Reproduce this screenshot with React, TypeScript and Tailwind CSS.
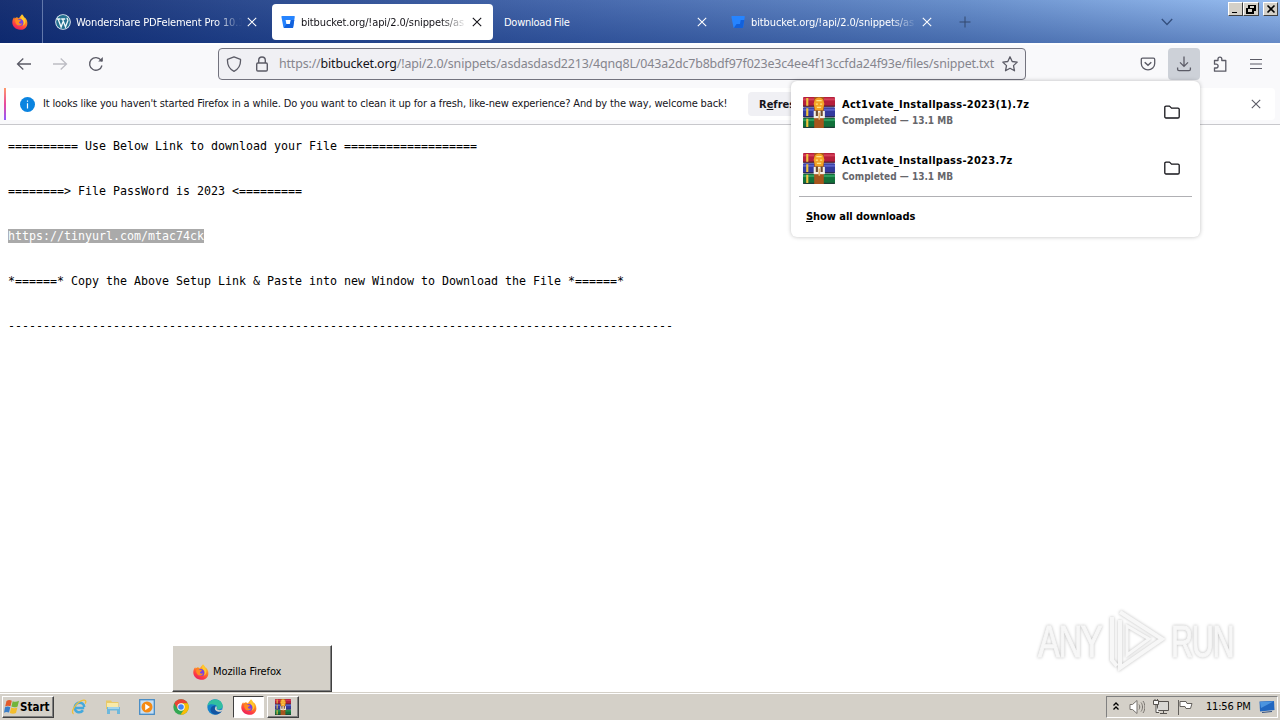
import React from 'react';

const TAHOMA = "font-['DejaVu_Sans_Condensed','DejaVu_Sans',sans-serif] [font-stretch:condensed]";

const FirefoxLogo: React.FC<{ id: string }> = ({ id }) => (
  <svg viewBox="0 0 16 16" className="w-4 h-4 shrink-0">
    <defs>
      <linearGradient id={id} x1="0.8" y1="0" x2="0.3" y2="1">
        <stop offset="0" stopColor="#ffd93a" />
        <stop offset="0.4" stopColor="#ff8a1e" />
        <stop offset="0.75" stopColor="#ff3b45" />
        <stop offset="1" stopColor="#e5205f" />
      </linearGradient>
    </defs>
    <path d="M10 .3c1.2 1 1.7 2 2.2 3 .9.3 1.6 1 2.1 2 1.1 2 1.5 4.600.6 6.600-1.300 2.600-3.900 4-6.900 3.900C3.700 15.700.4 12.500.3 8.600.3 6.500 1 4.600 2.200 3.300l.4 1.200C3.300 3.800 4 3.400 4.800 3.200 5.600 3.400 6.500 3.900 7 4.500 7.600 2.900 9 1.600 10 .3z" fill={`url(#${id})`} />
    <circle cx="8" cy="8.400" r="3.500" fill="#7542e5" />
    <path d="M3.300 5.500c1.400-.6 2.700-.3 3.700.5 1 .1 1.800.2 2 .6-.3.900-1.500 1-2.100 1.500.1 1.500 1.600 2.200 3.300 1.200-.6 2-3 2.900-4.800 1.900C3.700 10.200 2.800 7.700 3.300 5.500z" fill="#ff8c22" />
    <path d="M10.200 1c.4 2 3.600 3.600 3.200 7-.2 2-1.600 3.300-2.800 3.800 1-1.300 1.500-3 .8-4.500-.6-1.300-2.400-2.300-2.300-4 .1-1 .6-1.700 1.100-2.300z" fill="#ffca2c" />
  </svg>
);

const WordpressLogo = () => (
  <svg viewBox="0 0 16 16" className="w-4 h-4 shrink-0">
    <circle cx="8" cy="8" r="7.800" fill="#e8f3f7" />
    <circle cx="8" cy="8" r="6.900" fill="#23708f" />
    <path d="M2 5h3.500M6.200 5h4M3.100 5l3 8L8 7.700M7.500 5l3 8 2.300-6.300c.3-1.300-.8-1.600-.7-3" stroke="#f1f8fa" strokeWidth="1.300" fill="none" />
  </svg>
);

const BitbucketLogo: React.FC<{ dim?: boolean }> = ({ dim }) => (
  <svg viewBox="0 0 16 16" className="w-4 h-4 shrink-0">
    <path d="M2 2h12.200c.4 0 .7.3.6.7l-1.700 10.700c-.1.4-.4.6-.7.6H4.200c-.4 0-.7-.3-.8-.7L1.400 2.700c0-.4.2-.7.6-.7z" fill="#2684ff" />
    <path d="M14.300 6h-3.600l-.7 4H6.600L4 13.600c.1.200.3.300.5.300h8c.3 0 .5-.2.6-.5z" fill="#1261dc" />
    {!dim && <path d="M5.600 5.900h5l-.8 4.100H6.400z" fill="#fff" />}
  </svg>
);

const WinrarLogo: React.FC<{ className: string }> = ({ className }) => (
  <svg viewBox="1 1 30 30" className={className} preserveAspectRatio="none">
    <rect x="1" y="1" width="30" height="9.500" rx="1" fill="#b51f3b" />
    <path d="M1 2.300h30v2H1z" fill="#d6405a" />
    <rect x="1" y="11" width="30" height="9.500" rx="1" fill="#333a9d" />
    <path d="M1 12.300h30v2H1z" fill="#5a62c8" />
    <rect x="1" y="21" width="30" height="10" rx="1" fill="#12713a" />
    <path d="M1 22.300h30v2H1z" fill="#2c9c5c" />
    <path d="M1 9.300h30v1.400H1zM1 19.500h30v1.300H1zM1 29.800h30V31H1z" fill="#262033" opacity=".65" />
    <path d="M4 2h2v7.500H4zM4 12h2v7.500H4zM4 22h2v8H4z" fill="#f1c440" />
    <path d="M11.500 1h9v30h-9z" fill="#a7551d" />
    <path d="M12 4c1.500-3.500 6.500-3.500 8 0l1 3.500-1.500 6.500h-7L11 7.500z" fill="#f3a324" />
    <path d="M13.500 4.500h5M13 8h2M17 8h2M14 11h4" stroke="#ffe487" strokeWidth="1.200" />
    <rect x="11" y="14.500" width="10.500" height="7" fill="#f4f0e8" />
    <path d="M13 14h2v5.500h-2zM17.500 14h2v5.500h-2z" fill="#6d4a2f" />
    <path d="M15.500 16h1.500v7h-1.500z" fill="#e5b26b" />
  </svg>
);

const CloseIcon: React.FC<{ className?: string }> = ({ className }) => (
  <svg viewBox="0 0 10 10" className={`w-[10px] h-[10px] ${className ?? ''}`} fill="none" stroke="currentColor" strokeWidth="1.100">
    <path d="M.8.8l8.400 8.400M9.200.8L.8 9.200" />
  </svg>
);

interface TabProps {
  title: string;
  icon?: React.ReactNode;
  active?: boolean;
  fade?: boolean;
}

const Tab: React.FC<TabProps> = ({ title, icon, active, fade }) => (
  <div className={`flex items-center w-[221px] h-9 pl-2 pr-[6px] rounded ${active ? 'bg-white text-[#15141a]' : 'text-white'}`}>
    {icon && <span className="mr-[5px]">{icon}</span>}
    <span
      className={`flex-1 min-w-0 overflow-hidden whitespace-nowrap text-[11px] leading-4 pt-[2px] ${
        fade
          ? 'tracking-[-0.11px] [mask-image:linear-gradient(to_right,#000_84%,transparent_100%)]'
          : 'tracking-[-0.25px] -ml-px'
      }`}
    >
      {title}
    </span>
    <span className="w-5 flex justify-center">
      <CloseIcon />
    </span>
  </div>
);

const tabs: TabProps[] = [
  { title: 'Wondershare PDFelement Pro 10.1', icon: <WordpressLogo />, fade: true },
  { title: 'bitbucket.org/!api/2.0/snippets/as', icon: <BitbucketLogo />, active: true, fade: true },
  { title: 'Download File' },
  { title: 'bitbucket.org/!api/2.0/snippets/as', icon: <BitbucketLogo dim />, fade: true },
];

const WindowButton: React.FC<{ children: React.ReactNode; className?: string }> = ({ children, className }) => (
  <span
    className={`flex items-center justify-center h-[14px] bg-[#d4d0c8] border border-t-white border-l-white border-b-[#404040] border-r-[#404040] ${className ?? ''}`}
  >
    <svg viewBox="0 0 12 10" className="w-3 h-[10px]" fill="none" stroke="#000" strokeWidth="1.600" shapeRendering="crispEdges">
      {children}
    </svg>
  </span>
);

const TitleBar = () => (
  <div className="relative h-[43px] flex items-center bg-[linear-gradient(to_bottom,rgba(255,255,255,0.06),rgba(20,50,120,0.35)),linear-gradient(to_right,#0a246a_0%,#1f3f87_18%,#3c60a8_45%,#6089c8_75%,#92baf0_100%)]">
    <div className="w-[42px] h-full flex items-center justify-center pr-[2px]">
      <FirefoxLogo id="ff-view" />
    </div>
    <div className="w-px h-full bg-[#6278ab] mr-1" />
    <div className="flex gap-1">
      {tabs.map((tab, i) => (
        <Tab key={i} {...tab} />
      ))}
    </div>
    <svg viewBox="0 0 12 12" className="w-3 h-3 ml-[16px]" stroke="#33486f" strokeWidth="1">
      <path d="M6 .5v11M.5 6h11" />
    </svg>
    <svg viewBox="0 0 12 8" className="w-3 h-2 ml-[190px]" stroke="#344f7e" strokeWidth="1.300" fill="none">
      <path d="M.8 1L6 6.500 11.200 1" />
    </svg>
    <div className="absolute top-[2px] right-[2px] flex">
      <WindowButton className="w-[15px]">
        <path d="M2 8.500h5" />
      </WindowButton>
      <WindowButton className="w-4 mr-1">
        <path d="M4 4V1.500h6V6H8M2 4.500h6V9H2z" strokeWidth="1.200" />
      </WindowButton>
      <WindowButton className="w-[15px]">
        <path d="M2.500 1.500l7 7M9.500 1.500l-7 7" shapeRendering="auto" />
      </WindowButton>
    </div>
  </div>
);

const NavBar = () => (
  <div className="h-[45px] flex items-center bg-[#f9f9fb] border-t-2 border-white text-[#5b5b66] pb-[5px]">
    <svg viewBox="0 0 16 16" className="w-4 h-4 ml-4" fill="none" stroke="currentColor" strokeWidth="1.300">
      <path d="M15 8H1.500M7.300 2.500L1.500 8l5.800 5.500" />
    </svg>
    <svg viewBox="0 0 16 16" className="w-4 h-4 ml-5 text-[#bdbdc4]" fill="none" stroke="currentColor" strokeWidth="1.300">
      <path d="M1 8h13.500M8.700 2.500l5.800 5.500-5.800 5.500" />
    </svg>
    <svg viewBox="0 0 16 16" className="w-4 h-4 ml-5" fill="none" stroke="currentColor" strokeWidth="1.300">
      <path d="M14 9.500A6.300 6.300 0 1 1 13 4.200l1 1" />
      <path d="M14.800 1v4.600h-4.600z" fill="currentColor" stroke="none" />
    </svg>
    <div className="ml-[114px] w-[808px] h-8 flex items-center bg-[#f0f0f4] border border-[#73737e] rounded">
      <svg viewBox="0 0 16 16" className="w-4 h-4 ml-[7px]" fill="none" stroke="currentColor" strokeWidth="1.300">
        <path d="M8 .8l6.500 2.500c.3 4.600-1.600 9.700-6.500 12-4.900-2.300-6.800-7.400-6.500-12z" strokeLinejoin="round" />
      </svg>
      <svg viewBox="0 0 16 16" className="w-4 h-4 ml-3" fill="none" stroke="currentColor" strokeWidth="1.400">
        <rect x="2.700" y="7" width="10.600" height="8" rx="1.200" />
        <path d="M4.700 7V4.300a3.300 3.300 0 0 1 6.600 0V7" />
      </svg>
      <span className="ml-[9px] w-[718px] whitespace-nowrap font-['Noto_Sans',sans-serif] text-[12.4px] leading-5 tracking-[-0.14px] text-[#85858d]">
        https://<span className="text-[#15141a]">bitbucket.org</span>
        /!api/2.0/snippets/asdasdasd2213/4qnq8L/043a2dc7b8bdf97f023e3c4ee4f13ccfda24f93e/files/snippet.txt
      </span>
      <svg viewBox="0 0 16 16" className="w-4 h-4 ml-[5px] shrink-0" fill="none" stroke="currentColor" strokeWidth="1.300" strokeLinejoin="round">
        <path d="M8 .8l2.200 4.700 5 .6-3.700 3.500 1 5.200L8 12.300l-4.500 2.500 1-5.200L.8 6.100l5-.6z" />
      </svg>
    </div>
    <svg viewBox="0 0 16 16" className="w-4 h-4 ml-[114px]" fill="none" stroke="currentColor" strokeWidth="1.300">
      <path d="M2.500 2.200h11c.7 0 1.200.5 1.200 1.200v4c0 3.600-3 6.500-6.700 6.500s-6.700-2.900-6.700-6.500v-4c0-.7.500-1.200 1.200-1.200z" />
      <path d="M4.700 6.300L8 9.300l3.300-3" strokeWidth="1.500" />
    </svg>
    <div className="ml-3 w-8 h-8 rounded bg-[#cdd1d8] flex items-center justify-center">
      <svg viewBox="0 0 16 16" className="w-4 h-4" fill="none" stroke="currentColor" strokeWidth="1.300">
        <path d="M8 .5v9.700M4 6.400l4 4 4-4M1.600 11.500v1.800c0 .9.700 1.400 1.400 1.400h10c.7 0 1.400-.5 1.400-1.400v-1.800" />
      </svg>
    </div>
    <svg viewBox="0 0 16 16" className="w-4 h-4 ml-3" fill="none" stroke="currentColor" strokeWidth="1.300" strokeLinejoin="round">
      <path d="M2.500 4.500H6V3a1.900 1.900 0 0 1 3.800 0v1.500h4v10.700H2.500v-3.200h1.700a1.900 1.900 0 0 0 0-3.800H2.500z" />
    </svg>
    <svg viewBox="0 0 16 16" className="w-4 h-4 ml-5" stroke="currentColor" strokeWidth="1.200">
      <path d="M2 3.500h12M2 8h12M2 12.500h12" />
    </svg>
  </div>
);

const InfoBar = () => (
  <div className="h-[37px] bg-[#f9f9fb] border-b border-[#c8c8cc] px-1">
    <div className="h-8 w-[1271px] flex items-center bg-white rounded-sm text-[#15141a] pr-[14px]">
      <div className="w-[2px] h-8 bg-[linear-gradient(to_bottom,#ff9a6a,#e8489c,#9059ff)]" />
      <span className="ml-[14px] w-[15px] h-[15px] rounded-full bg-[#0b84e0] flex items-center justify-center">
        <svg viewBox="0 0 15 15" className="w-[15px] h-[15px]" stroke="#fff" strokeWidth="1.200">
          <path d="M7.500 3.500v1.300M7.500 6.200v5.300" />
        </svg>
      </span>
      <span className="ml-2 w-[705px] text-[11px] whitespace-nowrap tracking-[-0.143px]">
        It looks like you haven't started Firefox in a while. Do you want to clean it up for a fresh, like-new experience? And by the way, welcome back!
      </span>
      <span className="h-6 w-[110px] rounded bg-[#f0f0f4] pl-[11px] text-[11px] font-bold leading-[25px]">
        R<span className="underline">e</span>fres
      </span>
      <CloseIcon className="ml-auto text-[#5b5b66] w-[9px] h-[9px]" />
    </div>
  </div>
);

const downloads = [
  { name: 'Act1vate_Installpass-2023(1).7z', status: 'Completed — 13.1 MB' },
  { name: 'Act1vate_Installpass-2023.7z', status: 'Completed — 13.1 MB' },
];

const DownloadsPanel = () => (
  <div className="absolute left-[791px] top-[81px] w-[409px] h-[156px] rounded-md bg-white shadow-[0_0_4px_rgba(0,0,0,0.25)] px-2 pt-[3px] text-[#15141a]">
    {downloads.map((d) => (
      <div key={d.name} className="h-14 flex items-center pl-1 pr-3">
        <WinrarLogo className="w-8 h-[31px]" />
        <div className="ml-[7px] pt-[1px] flex-1 font-bold whitespace-nowrap">
          <div className="text-[11px] leading-4 pt-px tracking-[0.27px] text-black">{d.name}</div>
          <div className="text-[10px] leading-4 text-[#66666b]">{d.status}</div>
        </div>
        <svg viewBox="0 0 16 16" className="w-4 h-4 mb-px" fill="none" stroke="#15141a" strokeWidth="1.300" strokeLinejoin="round">
          <path d="M.8 3.300c0-.7.500-1.200 1.200-1.200h3.500l2 2H14c.7 0 1.200.5 1.200 1.200v7.500c0 .7-.5 1.200-1.200 1.200H2c-.7 0-1.200-.5-1.200-1.200z" />
        </svg>
      </div>
    ))}
    <div className="h-px bg-[#b0b0b4]" />
    <div className="pl-[7px] pt-3 text-[11px] leading-4 font-bold tracking-[-0.06px] text-black">
      <span className="underline">S</span>how all downloads
    </div>
  </div>
);

const Document = () => (
  <pre className="h-[567px] pl-2 pt-[14px] font-['DejaVu_Sans_Mono',monospace] text-[11.63px] leading-[15px] text-black">
    {'========== Use Below Link to download your File ===================\n\n\n'}
    {'========> File PassWord is 2023 <=========\n\n\n'}
    <span className="bg-[#aaaaaa] text-white">https://tinyurl.com/mtac74ck</span>
    {'\n\n\n*======* Copy the Above Setup Link & Paste into new Window to Download the File *======*\n\n\n'}
    {'-'.repeat(95)}
  </pre>
);

const Watermark = () => (
  <div className="absolute left-[1038px] top-[608px] flex items-center h-16 text-[#f7f7f7] [filter:drop-shadow(0_0_1.500px_#bcbcbc)]">
    <span className="w-[69px] pt-[2px] font-['Liberation_Sans_Narrow','Liberation_Sans',sans-serif] text-[45px] leading-none tracking-[-2px] [-webkit-text-stroke:1px_#f7f7f7]">
      <span className="inline-block origin-left scale-x-[0.73]">ANY</span>
    </span>
    <svg viewBox="0 0 60 64" className="w-[60px] h-16 shrink-0" fill="none" stroke="#f7f7f7" strokeWidth="4">
      <path d="M13 4l42 27-42 29V12M5 9v43l5 6" />
      <path d="M20 18l22 13-22 16z" strokeWidth="3" />
    </svg>
    <span className="ml-[4px] pt-[2px] font-['Liberation_Sans_Narrow','Liberation_Sans',sans-serif] text-[45px] leading-none tracking-[-2px] [-webkit-text-stroke:1px_#f7f7f7]">
      <span className="inline-block origin-left scale-x-[0.68]">RUN</span>
    </span>
  </div>
);

const raised = 'border border-t-white border-l-white border-b-[#404040] border-r-[#404040] shadow-[inset_-1px_-1px_0_#808080]';

const TaskPreview = () => (
  <div className={`absolute left-[172px] top-[645px] w-[160px] h-[47px] bg-[#d4d0c8] flex items-center pl-5 pt-[7px] text-[11px] ${raised}`}>
    <FirefoxLogo id="ff-preview" />
    <span className="ml-[4px] pt-px tracking-[-0.1px]">Mozilla Firefox</span>
  </div>
);

const TaskBar = () => (
  <div className="h-7 bg-[#d4d0c8] border-t border-[#d4d0c8] shadow-[inset_0_1px_0_#fff] flex items-center text-[11px] text-black pl-[2px]">
    <div className={`w-[52px] h-[22px] flex items-center pl-[1px] font-bold bg-[#d4d0c8] ${raised}`}>
      <svg viewBox="0 0 16 16" className="w-4 h-4">
        <path d="M2.500 2c2-1.300 3.700-1 5.300-.2L6.500 7.300C4.800 6.500 3 6.500 1.200 7.400z" fill="#e35b2a" />
        <path d="M8.700 2.200c2 .9 3.800.9 6.300-.4l-1.400 5.600c-2 1.200-4 1.200-6.200.2z" fill="#73b43b" />
        <path d="M1 8.300c1.800-1 3.500-1 5.300-.1L5 13.600c-1.800-.9-3.500-.8-5 .2z" fill="#3a7ec8" />
        <path d="M7.200 8.500c2 1 4 1 6.200 0L12 14c-2 1-4 1-6.200 0z" fill="#f3bd2d" />
      </svg>
      <span className="pt-[2px] text-[11.5px]">Start</span>
    </div>
    <div className="flex items-center ml-[17px] gap-[18px]">
      <svg viewBox="0 0 16 16" className="w-4 h-4" fill="none">
        <path d="M13.200 9H3.800c.2 5 6 5.400 8.200 2.300M3.800 8c.3-5.500 9.200-5.700 9.400 0" stroke="#45a9dc" strokeWidth="2.500" />
        <path d="M2.600 14.800C-1.500 13 6 2.400 12.500 1.200c3-.5 2.600 2 1.600 3.500" stroke="#efbf3a" strokeWidth="1.300" />
      </svg>
      <svg viewBox="0 0 16 16" className="w-4 h-4">
        <path d="M1 1.500h5l1 1.500h6.500v7H1z" fill="#e8c968" />
        <path d="M2 4h11v4H2z" fill="#f8eaa9" />
        <path d="M2 8h13v7h-3v-3.500H5V15H2z" fill="#6eb8dc" />
        <path d="M3 9h11" stroke="#d5eff9" />
      </svg>
      <svg viewBox="0 0 16 16" className="w-4 h-4">
        <rect x=".7" y=".7" width="14.600" height="14.600" fill="#c6dff4" stroke="#468bc5" strokeWidth="1.300" />
        <circle cx="8" cy="8" r="5.500" fill="#f58a13" />
        <path d="M6.200 4.800v6.400L11 8z" fill="#fff" />
      </svg>
      <svg viewBox="0 0 16 16" className="w-4 h-4">
        <circle cx="8" cy="8" r="7.700" fill="#34a853" />
        <path d="M1.300 4.200A7.700 7.700 0 0 1 14.700 4.200L8 4.500 4.700 9.900z" fill="#ea4335" />
        <path d="M14.700 4.200A7.700 7.700 0 0 1 7.500 15.700L11.300 9.900 8 4.300z" fill="#fbbc05" />
        <circle cx="8" cy="8" r="3.700" fill="#fff" />
        <circle cx="8" cy="8" r="2.800" fill="#4285f4" />
      </svg>
      <svg viewBox="0 0 16 16" className="w-4 h-4">
        <circle cx="8" cy="8" r="7.700" fill="#1683cb" />
        <path d="M.5 7C1.200-1.500 15-2 15.700 7c.1 3-3.500 4-6 3 1-1.300.8-3.300-1.200-4C5.500 4.900 2 5 .5 7z" fill="#31bfa0" />
        <path d="M9 6.500c-2 1.500-1.500 5 2 6 1.500.4 3 .1 4-.5-3 5-11 4.500-11.500-1C3.300 8.500 6 5.800 9 6.500z" fill="#1255a3" />
        <path d="M9 7c1.200 1 .9 2.300.5 3 1.500 1.500 4 1.400 5.800.4l-.6 1.800c-3 1.400-7-.3-6.800-3z" fill="#d4d0c8" />
      </svg>
    </div>
    <div className="ml-[10px] w-[31px] h-[22px] bg-white border border-t-[#404040] border-l-[#404040] border-b-white border-r-white flex items-center justify-center">
      <FirefoxLogo id="ff-task" />
    </div>
    <div className={`ml-[3px] w-8 h-[22px] flex items-center justify-center ${raised}`}>
      <WinrarLogo className="w-4 h-4" />
    </div>
    <div className="ml-auto mr-[2px] w-[172px] h-[22px] flex items-center border border-t-[#808080] border-l-[#808080] border-b-white border-r-white pl-[6px]">
      <svg viewBox="0 0 6 8" className="w-[6px] h-2 mb-[2px]" fill="none" stroke="#000" strokeWidth="1.300">
        <path d="M.5 3.500L3 1l2.500 2.500M.5 7.500L3 5l2.500 2.500" />
      </svg>
      <svg viewBox="0 0 16 16" className="w-4 h-4 ml-[10px]" fill="none" stroke="#77736e">
        <path d="M1 5.500h2.500L8 1.500v13l-4.500-4H1z" fill="#fff" />
        <path d="M10 5.500c1 1.500 1 3.500 0 5M12 3.500c2 2.500 2 6.500 0 9M14 2c2.500 3.500 2.500 8.500 0 12" />
      </svg>
      <svg viewBox="0 0 16 16" className="w-4 h-4 ml-2" fill="none" stroke="#55524e">
        <path d="M4.500 2.500h11v9h-11z" fill="#d9d8d4" />
        <path d="M7 14.500h7M10.500 11.500v3" />
        <path d="M.5 1.500h5v4h-5zM2 0v2M4.500 0v2M3 5.500v8h3" fill="#f7f7f7" />
      </svg>
      <svg viewBox="0 0 16 16" className="w-4 h-4 ml-2" fill="#fff" stroke="#64615d">
        <path d="M1.500 1v15M3 2.500h6l1 2h5l-1.500 5H9l-1-2H3z" />
      </svg>
      <span className="ml-[13px] w-[46px] whitespace-nowrap pt-[2px] tracking-[-0.2px]">11:56 PM</span>
      <svg viewBox="0 0 16 14" className="w-4 h-[14px] ml-[7px]">
        <path d="M.5 1.500L15 1l.5 9L1 11.500z" fill="#2167c0" />
        <path d="M1 2l13.500-.5L2 8z" fill="#4b94df" />
        <path d="M3 12.500l10-1" stroke="#34517e" />
      </svg>
    </div>
  </div>
);

export default function App() {
  return (
    <div className={`relative w-[1280px] h-[720px] overflow-hidden bg-white ${TAHOMA}`}>
      <TitleBar />
      <NavBar />
      <InfoBar />
      <Document />
      <TaskBar />
      <DownloadsPanel />
      <TaskPreview />
      <Watermark />
    </div>
  );
}
